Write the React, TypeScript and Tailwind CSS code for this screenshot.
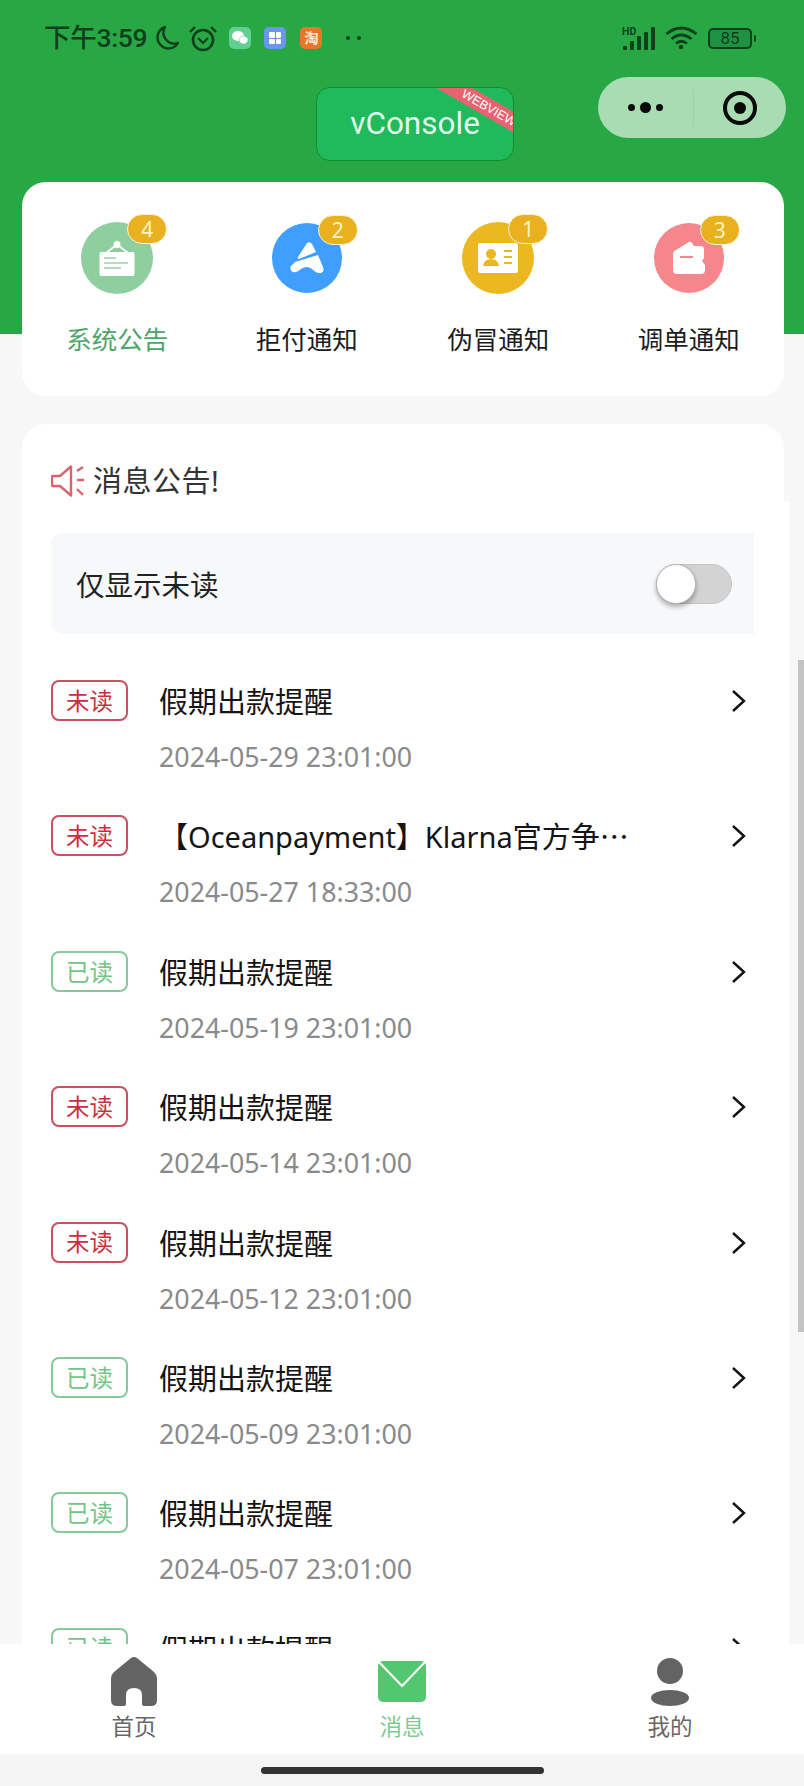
import React from 'react';

const FONT = '[font-family:"Noto_Sans","Noto_Sans_CJK_SC",sans-serif]';

const tiles = [
  { label: '系统公告', count: 4, bg: 'bg-[#8fcf9f]', size: 'w-[72px] h-[72px]', text: 'text-[#4fa56a]', shift: '' },
  { label: '拒付通知', count: 2, bg: 'bg-[#409eff]', size: 'w-[70px] h-[70px]', text: 'text-[#1c1c1c]', shift: 'mr-[2px]' },
  { label: '伪冒通知', count: 1, bg: 'bg-[#ecb822]', size: 'w-[72px] h-[72px]', text: 'text-[#1c1c1c]', shift: '' },
  { label: '调单通知', count: 3, bg: 'bg-[#f5868c]', size: 'w-[70px] h-[70px]', text: 'text-[#1c1c1c]', shift: '' },
];

const notices = [
  { read: false, title: '假期出款提醒', time: '2024-05-29 23:01:00' },
  { read: false, title: '【Oceanpayment】Klarna官方争⋯', time: '2024-05-27 18:33:00' },
  { read: true, title: '假期出款提醒', time: '2024-05-19 23:01:00' },
  { read: false, title: '假期出款提醒', time: '2024-05-14 23:01:00' },
  { read: false, title: '假期出款提醒', time: '2024-05-12 23:01:00' },
  { read: true, title: '假期出款提醒', time: '2024-05-09 23:01:00' },
  { read: true, title: '假期出款提醒', time: '2024-05-07 23:01:00' },
  { read: true, title: '假期出款提醒', time: '2024-05-02 23:01:00' },
];

const TileIcon = ({ index }: { index: number }) => {
  if (index === 0) {
    return (
      <svg width="36" height="36" viewBox="0 0 36 36">
        <circle cx="18" cy="4.5" r="3.5" fill="#fff" />
        <path d="M16 6 L7 13 M20 6 L29 13" stroke="#fff" strokeWidth="1.6" />
        <rect x="0.5" y="12" width="35" height="24" rx="2" fill="#fff" />
        <path d="M5 18 H17 M5 23 H29 M5 28 H22" stroke="#9ccfa9" strokeWidth="1.6" />
      </svg>
    );
  }
  if (index === 1) {
    return (
      <svg width="34" height="32" viewBox="0 0 34 32">
        <path d="M17 1 Q20 -1 22 2 L26 10 L9 17 Q7 17 8 15 Z" fill="#fff" />
        <path d="M28 13 L33 25 Q35 31 29 31 Q26 31 22 27 Q17 23 11 27 Q6 31 3 30 Q-1 28 1 24 L5 20 Z" fill="#fff" />
      </svg>
    );
  }
  if (index === 2) {
    return (
      <svg width="40" height="30" viewBox="0 0 40 30">
        <rect width="40" height="30" rx="2.5" fill="#fff" />
        <circle cx="13" cy="11" r="5" fill="#ecb822" />
        <path d="M5 23 Q6 16 13 16 Q20 16 21 23 Z" fill="#ecb822" />
        <path d="M26 8 H34 M26 14 H34 M26 20 H34" stroke="#ecb822" strokeWidth="1.8" />
      </svg>
    );
  }
  return (
    <svg width="34" height="34" viewBox="0 0 34 34">
      <path d="M4 9 L17 1 Q19 0 20 2 L22 5 H29 Q32 5 32 9 V17 L30 20 L33 24 V29 Q33 33 29 33 H5 Q1 33 1 29 V13 Q1 10 4 9 Z" fill="#fff" />
      <path d="M8 16 H21" stroke="#f5868c" strokeWidth="2" />
    </svg>
  );
};

const StatusLeft = () => (
  <div className="flex items-center">
    <span className="text-[26.5px] leading-[32px] font-medium text-[#0f3f1d] tracking-[-0.3px] [font-family:Roboto,'Noto_Sans_CJK_SC',sans-serif]">下午3:59</span>
    <svg className="ml-[7px]" width="26" height="26" viewBox="0 0 26 26" fill="none">
      <path d="M11 2 A11 11 0 1 0 24 18 A11 11 0 0 1 11 2 Z" stroke="#0f3f1d" strokeWidth="2.4" strokeLinejoin="round" />
    </svg>
    <svg className="ml-[9px]" width="28" height="27" viewBox="0 0 28 27" fill="none" stroke="#0f3f1d">
      <circle cx="14" cy="15" r="10" strokeWidth="2.6" />
      <path d="M9 13 L14 18 L19 13" strokeWidth="2.2" />
      <path d="M1 7 L6 2 M27 7 L22 2" strokeWidth="2.4" />
    </svg>
    <div className="ml-[12px] w-[22px] h-[22px] rounded-[5px] bg-[#5fd08f] flex items-center justify-center">
      <svg width="16" height="14" viewBox="0 0 16 14" fill="#fff">
        <ellipse cx="6" cy="5" rx="6" ry="5" />
        <ellipse cx="11.5" cy="9" rx="4.5" ry="4" stroke="#5fd08f" strokeWidth="0.6" />
      </svg>
    </div>
    <div className="ml-[13px] w-[22px] h-[22px] rounded-[5px] bg-[#6a96ef] grid grid-cols-2 gap-px p-[5px]">
      <div className="bg-white rounded-[1px]" />
      <div className="bg-white rounded-[1px]" />
      <div className="bg-white rounded-[1px]" />
      <div className="bg-white rounded-[1px]" />
    </div>
    <div className="ml-[14px] w-[22px] h-[22px] rounded-[5px] bg-[#e9752b] flex items-center justify-center text-[14px] leading-none text-[#ffe9d6] font-bold">淘</div>
    <div className="ml-[24px] flex gap-[7px]">
      <div className="w-[4px] h-[4px] rounded-full bg-[#0f3f1d]" />
      <div className="w-[4px] h-[4px] rounded-full bg-[#0f3f1d]" />
    </div>
  </div>
);

const StatusRight = () => (
  <div className="flex items-center">
    <svg width="35" height="23" viewBox="0 0 35 23" fill="#0f3f1d">
      <text x="0" y="8" fontSize="10.5" fontWeight="700" fontFamily="Roboto, sans-serif">HD</text>
      <rect x="1" y="19" width="4" height="4" rx="1" />
      <rect x="8" y="14" width="4" height="9" rx="1" />
      <rect x="15" y="9" width="4" height="14" rx="1" />
      <rect x="22" y="5" width="4" height="18" rx="1" />
      <rect x="29" y="0" width="4" height="23" rx="1" />
    </svg>
    <svg className="ml-[8px]" width="33" height="24" viewBox="0 0 33 24" fill="none" stroke="#0f3f1d" strokeWidth="2.8">
      <path d="M1.5 8 Q16 -4 31.5 8" />
      <path d="M6.5 13 Q16 5 26.5 13" />
      <path d="M11 17.5 Q16 13 22 17.5" />
      <circle cx="16" cy="21" r="2.2" fill="#0f3f1d" stroke="none" />
    </svg>
    <div className="ml-[10px] w-[44px] h-[21px] rounded-[5px] border-[2px] border-[#0f3f1d] bg-[#1f9142] flex items-center justify-center text-[17px] leading-none text-[#0f3f1d] [font-family:Roboto,sans-serif]">85</div>
    <div className="ml-[2px] w-[2px] h-[7px] rounded-r-sm bg-[#0f3f1d]" />
  </div>
);

const Header = () => (
  <div className="h-[334px] bg-[#28a745]">
    <div className="h-[76px] flex items-center justify-between pl-[44px] pr-[48px]">
      <StatusLeft />
      <StatusRight />
    </div>
    <div className="mt-px flex items-start pl-[316px]">
      <div className="relative overflow-hidden mt-[10px] w-[198px] h-[74px] rounded-[14px] border-[1.5px] border-[#0f8f2e] bg-[#20ba5c] flex items-center justify-center">
        <span className="text-[31.5px] leading-none text-[#dffbea] [font-family:Roboto,sans-serif]">vConsole</span>
        <div className="absolute top-[11px] right-[-31px] w-[110px] h-[18px] rotate-[30deg] bg-[#e8626f] text-center text-[12.5px] leading-[18px] font-medium text-white [font-family:'Liberation_Sans',sans-serif]">WEBVIEW</div>
      </div>
      <div className="ml-[84px] w-[188px] h-[61px] rounded-full bg-[#a9dcb2] flex items-center">
        <div className="flex-1 flex items-center justify-center gap-[5px]">
          <div className="w-[7px] h-[7px] rounded-full bg-[#0a0a0a]" />
          <div className="w-[11px] h-[11px] rounded-full bg-[#0a0a0a]" />
          <div className="w-[7px] h-[7px] rounded-full bg-[#0a0a0a]" />
        </div>
        <div className="w-px h-[38px] bg-[#9fd3a9]" />
        <div className="w-[92px] flex items-center justify-center">
          <div className="w-[34px] h-[34px] rounded-full border-[4px] border-[#0a0a0a] flex items-center justify-center">
            <div className="w-[12px] h-[12px] rounded-full bg-[#0a0a0a]" />
          </div>
        </div>
      </div>
    </div>
  </div>
);

const Tiles = () => (
  <div className="-mt-[152px] ml-[22px] mr-[20px] h-[214px] rounded-[24px] bg-white grid grid-cols-4 pt-[40px]">
    {tiles.map((t, i) => (
      <div key={t.label} className={`flex flex-col items-center ${t.shift}`}>
        <div className="h-[72px] flex items-center">
          <div className={`relative rounded-full flex items-center justify-center ${t.size} ${t.bg}`}>
            <TileIcon index={i} />
            <div className="absolute -top-[8px] left-[46px] w-[40px] h-[30px] rounded-full bg-[#e9b11f] border border-[#fff3cf] flex items-center justify-center text-[21px] leading-none text-[#fff3c4]">{t.count}</div>
          </div>
        </div>
        <span className={`mt-[27px] text-[25.5px] leading-[36px] ${t.text}`}>{t.label}</span>
      </div>
    ))}
  </div>
);

const Row = ({ read, title, time }: { read: boolean; title: string; time: string }) => (
  <div className="h-[135.4px] flex items-start">
    <div className={`w-[77px] h-[41px] pt-[2px] rounded-[8px] border-[2px] flex items-center justify-center text-[23.5px] leading-none ${read ? 'border-[#86c99c] text-[#72c487]' : 'border-[#c9505e] text-[#c9303f]'}`}>
      {read ? '已读' : '未读'}
    </div>
    <div className="ml-[31px] flex-1 min-w-0 pt-[2px]">
      <div className="text-[29px] leading-[40px] text-[#141414] whitespace-nowrap">{title}</div>
      <div className="mt-[15px] text-[26.8px] leading-[40px] text-[#8a8a8a]">{time}</div>
    </div>
    <svg className="mr-[6px] mt-[8px]" width="18" height="26" viewBox="0 0 18 26" fill="none" stroke="#111" strokeWidth="2.4">
      <path d="M3 3 L14 13 L3 23" />
    </svg>
  </div>
);

const Notices = () => (
  <div className="mt-[28px] ml-[22px] mr-[20px] rounded-t-[24px] bg-white pt-[37px] pl-[29px]">
    <div className="h-[40px] flex items-center">
      <svg width="34" height="32" viewBox="0 0 34 32" fill="none" stroke="#d9646e">
        <path d="M20 1.5 V30.5 L9 21 H2 Q1 21 1 20 V12 Q1 11 2 11 H9 Z" strokeWidth="2.4" strokeLinejoin="round" />
        <path d="M26 6 L32 2 M26 15 H33 M26 24 L32 30" strokeWidth="2.4" />
      </svg>
      <span className="ml-[8px] text-[29px] tracking-[0.5px] leading-[40px] text-[#333]">消息公告!</span>
    </div>
    {/* the white reaches 5px past the card's corner from here down */}
    <div className="-mr-[5px] pr-[35px] bg-white">
      <div className="pt-[32px]">
        <div className="h-[101px] rounded-l-[12px] bg-[#f7f8fa] flex items-center justify-between pl-[25px] pr-[22px]">
          <span className="pt-[2px] text-[28.5px] leading-[40px] text-[#222]">仅显示未读</span>
          <div className="relative w-[76px] h-[40px] rounded-full bg-[#d3d3d3] border border-[#c6c6c6]">
            <div className="absolute -left-px -top-px w-[40px] h-[40px] rounded-full bg-white border border-[#b5b5b5] shadow-[0_3px_5px_rgba(0,0,0,0.3)]" />
          </div>
        </div>
      </div>
      <div className="mt-[46px]">
        {notices.map((n, i) => (
          <Row key={i} {...n} />
        ))}
      </div>
    </div>
  </div>
);

const TabBar = () => (
  <div className="relative h-[110px] bg-white grid grid-cols-3 pt-[13px]">
    <div className="flex flex-col items-center">
      <div className="h-[49px] flex items-end">
        <svg width="46" height="49" viewBox="0 0 46 49" fill="#636363">
          <path d="M20 1 Q23 -1 26 1 L43 15 Q46 18 46 21 V43 Q46 49 40 49 H33 Q31 49 31 47 V38 Q31 31 23 31 Q15 31 15 38 V47 Q15 49 13 49 H6 Q0 49 0 43 V21 Q0 18 3 15 Z" />
        </svg>
      </div>
      <span className="mt-[5px] text-[22.5px] leading-[32px] text-[#666]">首页</span>
    </div>
    <div className="flex flex-col items-center">
      <div className="h-[45px] mt-[4px] flex items-start">
        <svg width="48" height="41" viewBox="0 0 48 41">
          <rect width="48" height="41" rx="5" fill="#52c76f" />
          <path d="M1 1 L24 25 L47 1" fill="none" stroke="#fff" strokeWidth="2" />
        </svg>
      </div>
      <span className="mt-[5px] text-[22.5px] leading-[32px] text-[#7ccb90]">消息</span>
    </div>
    <div className="flex flex-col items-center">
      <div className="h-[49px] flex items-end">
        <svg width="38" height="48" viewBox="0 0 38 48" fill="#636363">
          <circle cx="19" cy="13" r="13" />
          <ellipse cx="19" cy="40" rx="19" ry="8" />
        </svg>
      </div>
      <span className="mt-[5px] text-[22.5px] leading-[32px] text-[#666]">我的</span>
    </div>
  </div>
);

export default function App() {
  return (
    <div className={`relative w-[804px] h-[1786px] overflow-hidden flex flex-col bg-[#f7f7f7] ${FONT}`}>
      <div className="flex-1 min-h-0 overflow-hidden">
        <Header />
        <Tiles />
        <Notices />
      </div>
      {/* fake scrollbar from the webview */}
      <div className="absolute right-0 top-[660px] w-[6px] h-[672px] bg-[#c4c4c4]" />
      <TabBar />
      <div className="h-[32px] bg-[#f5f5f5] flex justify-center pt-[13px]">
        <div className="w-[283px] h-[7px] rounded-full bg-[#333]" />
      </div>
    </div>
  );
}
